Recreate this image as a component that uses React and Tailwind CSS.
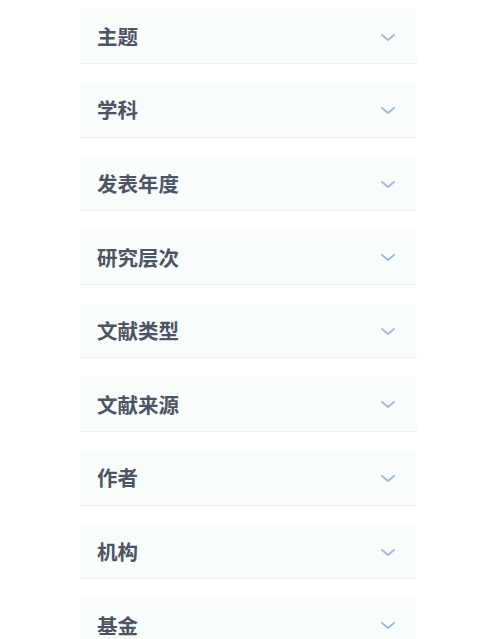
import React from "react";

const items = ["主题", "学科", "发表年度", "研究层次", "文献类型", "文献来源", "作者", "机构", "基金"];

function Chevron() {
  return (
    <svg className="mt-[3px]" width="16" height="10" viewBox="0 0 16 10" fill="none">
      <path d="M2 2l6 5 6-5" stroke="#a8b9d8" strokeWidth="2" strokeLinecap="round" strokeLinejoin="round" />
    </svg>
  );
}

export default function App() {
  return (
    <div className="w-[500px] h-[639px] overflow-hidden bg-white" style={{ fontFamily: '"Noto Sans CJK SC", "Noto Sans", sans-serif' }}>
      <div className="flex flex-col gap-[18.6px] pt-[9px] pl-[80px] pr-[83px]">
        {items.map((t) => (
          <div key={t} className="h-[55px] shrink-0 flex items-center justify-between pl-[17px] pr-[21px] bg-[#f8fcfc] border-b border-[#eef2f3]">
            <span className="text-[20.5px] font-bold text-[#4d5463] leading-none">{t}</span>
            <Chevron />
          </div>
        ))}
      </div>
    </div>
  );
}
